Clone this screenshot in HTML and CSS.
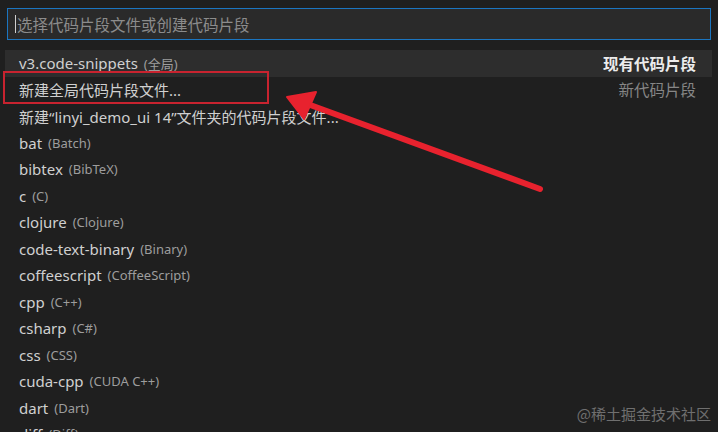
FILE: index.html
```html
<!DOCTYPE html>
<html lang="zh">
<head>
<meta charset="utf-8">
<title>代码片段</title>
<link rel="stylesheet" href="styles.css">
</head>
<body>
<div class="picker">
  <div class="input"><span class="caret"></span><span class="placeholder">选择代码片段文件或创建代码片段</span></div>
  <ul class="list">
    <li class="row active"><span class="label">v3.code-snippets</span><span class="desc">(全局)</span><span class="group strong">现有代码片段</span></li>
    <li class="row"><span class="label">新建全局代码片段文件...</span><span class="group">新代码片段</span></li>
    <li class="row"><span class="label">新建“linyi_demo_ui 14”文件夹的代码片段文件...</span></li>
    <li class="row"><span class="label">bat</span><span class="desc">(Batch)</span></li>
    <li class="row"><span class="label">bibtex</span><span class="desc">(BibTeX)</span></li>
    <li class="row"><span class="label">c</span><span class="desc">(C)</span></li>
    <li class="row"><span class="label">clojure</span><span class="desc">(Clojure)</span></li>
    <li class="row"><span class="label">code-text-binary</span><span class="desc">(Binary)</span></li>
    <li class="row"><span class="label">coffeescript</span><span class="desc">(CoffeeScript)</span></li>
    <li class="row"><span class="label">cpp</span><span class="desc">(C++)</span></li>
    <li class="row"><span class="label">csharp</span><span class="desc">(C#)</span></li>
    <li class="row"><span class="label">css</span><span class="desc">(CSS)</span></li>
    <li class="row"><span class="label">cuda-cpp</span><span class="desc">(CUDA C++)</span></li>
    <li class="row"><span class="label">dart</span><span class="desc">(Dart)</span></li>
    <li class="row"><span class="label">diff</span><span class="desc">(Diff)</span></li>
  </ul>
</div>
<div class="highlight-box"></div>
<svg class="arrow" width="718" height="432" viewBox="0 0 718 432">
  <line x1="540" y1="189" x2="302" y2="102" stroke="#e8222e" stroke-width="6" stroke-linecap="round"/>
  <polygon points="287,97 316,92 304,119" fill="#e8222e" stroke="#e8222e" stroke-width="2" stroke-linejoin="round"/>
</svg>
<div class="watermark">@稀土掘金技术社区</div>
</body>
</html>
```
FILE: styles.css
```css
html, body {
  margin: 0;
  padding: 0;
  background: #1f1f1f;
  width: 718px;
  height: 432px;
  overflow: hidden;
  font-family: "Noto Sans", "Noto Sans CJK SC", sans-serif;
}
.picker {
  padding: 8px 6px 0 5px;
}
.input {
  margin: 0 1px 0 2px;
  height: 30px;
  border: 1px solid #1b75c0;
  background: #2a2a2a;
  display: flex;
  align-items: center;
  padding-left: 7px;
}
.caret {
  width: 1px;
  height: 18px;
  background: #cfcfcf;
  margin-right: 1px;
}
.placeholder {
  color: #8c8c8c;
  font-size: 15.5px;
  font-family: "Noto Sans CJK SC", sans-serif;
}
.list {
  list-style: none;
  margin: 10px 0 0 0;
  padding: 0;
}
.row {
  height: 26.5px;
  display: flex;
  align-items: center;
  padding: 0 16px 0 14px;
  color: #cccccc;
  font-size: 15px;
  white-space: nowrap;
}
.row.active {
  background: #2d2d2d;
}
.label {
  color: #d0d0d0;
}
.desc {
  margin-left: 6px;
  color: #9d9d9d;
  font-size: 13px;
}
.group {
  margin-left: auto;
  color: #868686;
  font-size: 15.5px;
}
.group.strong {
  color: #ececec;
  font-weight: 600;
}
.highlight-box {
  position: absolute;
  left: 3px;
  top: 71px;
  width: 262px;
  height: 29px;
  border: 2px solid #c8232f;
}
.arrow {
  position: absolute;
  left: 0;
  top: 0;
}
.watermark {
  position: absolute;
  right: 7px;
  top: 403px;
  color: #6f6f6f;
  font-size: 15px;
  font-family: "Noto Sans CJK SC", sans-serif;
}
```
